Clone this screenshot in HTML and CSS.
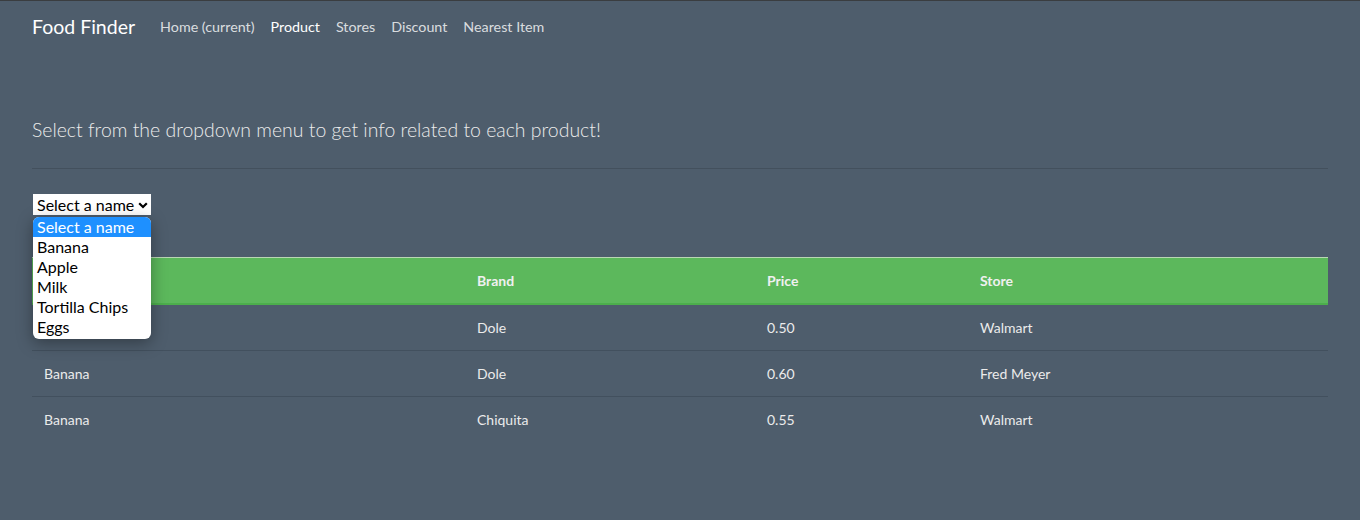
FILE: index.html
```html
<!DOCTYPE html>
<html lang="en">
<head>
<meta charset="utf-8">
<title>Food Finder</title>
<link rel="stylesheet" href="styles.css">
</head>
<body>
<nav class="navbar">
  <a class="brand" href="#">Food Finder</a>
  <ul class="nav-links">
    <li><a class="nav-link" href="#">Home (current)</a></li>
    <li><a class="nav-link active" href="#">Product</a></li>
    <li><a class="nav-link" href="#">Stores</a></li>
    <li><a class="nav-link" href="#">Discount</a></li>
    <li><a class="nav-link" href="#">Nearest Item</a></li>
  </ul>
</nav>
<main class="container">
  <p class="lead">Select from the dropdown menu to get info related to each product!</p>
  <hr class="divider">
  <div class="picker">
    <div class="select">
      <span>Select a name</span>
      <svg class="chevron" width="10" height="7" viewBox="0 0 10 7"><path d="M1.2 1.2 L5 5 L8.8 1.2" fill="none" stroke="#000" stroke-width="2.2"/></svg>
    </div>
    <ul class="options">
      <li class="option selected">Select a name</li>
      <li class="option">Banana</li>
      <li class="option">Apple</li>
      <li class="option">Milk</li>
      <li class="option">Tortilla Chips</li>
      <li class="option">Eggs</li>
    </ul>
  </div>
  <table class="products">
    <colgroup>
      <col class="c-name"><col class="c-brand"><col class="c-price"><col class="c-store">
    </colgroup>
    <thead>
      <tr><th>Name</th><th>Brand</th><th>Price</th><th>Store</th></tr>
    </thead>
    <tbody>
      <tr><td>Banana</td><td>Dole</td><td>0.50</td><td>Walmart</td></tr>
      <tr><td>Banana</td><td>Dole</td><td>0.60</td><td>Fred Meyer</td></tr>
      <tr><td>Banana</td><td>Chiquita</td><td>0.55</td><td>Walmart</td></tr>
    </tbody>
  </table>
</main>
</body>
</html>
```
FILE: styles.css
```css
html, body {
  margin: 0;
  padding: 0;
}
body {
  background: #4e5d6c;
  border-top: 1px solid #3a3d40;
  font-family: Lato, "Open Sans", sans-serif;
  color: #ebebeb;
  font-size: 14px;
  line-height: 1.5;
  min-height: 519px;
}
.navbar {
  display: flex;
  align-items: center;
  height: 51px;
  padding: 0 32px;
}
.brand {
  color: #fff;
  text-decoration: none;
  font-size: 19.5px;
  line-height: 30px;
  margin-right: 25px;
}
.nav-links {
  display: flex;
  list-style: none;
  margin: 0;
  padding: 0;
}
.nav-link {
  display: block;
  padding: 0 8px;
  font-size: 14.3px;
  color: rgba(255,255,255,0.8);
  text-decoration: none;
}
.nav-links li:first-child .nav-link { padding-left: 0; }
.nav-link.active { color: #fff; }
.container {
  margin: 0 32px;
}
.lead {
  margin: 63px 0 0;
  font-size: 19.45px;
  font-weight: 300;
  line-height: 30px;
}
.divider {
  margin: 23px 0 0;
  border: 0;
  border-top: 1px solid #43505d;
  height: 0;
}
.picker {
  position: relative;
  margin-top: 25px;
  margin-left: 1px;
  width: 118px;
}
.select {
  display: flex;
  align-items: center;
  justify-content: space-between;
  height: 21px;
  padding: 0 3px 0 4px;
  background: #fff;
  color: #000;
  font-size: 16px;
  line-height: 21px;
}
.chevron { margin-top: 1px; }
.options {
  position: absolute;
  top: 23px;
  left: 0;
  width: 118px;
  margin: 0;
  padding: 0 0 2px;
  list-style: none;
  background: #fff;
  border-radius: 6px;
  box-shadow: 0 4px 16px rgba(0,0,0,0.35);
  overflow: hidden;
  z-index: 5;
}
.option {
  height: 20px;
  line-height: 20px;
  padding-left: 4px;
  color: #000;
  font-size: 16px;
}
.option.selected {
  background: #1e90ff;
  color: #fff;
}
.products {
  margin-top: 42px;
  width: 100%;
  border-collapse: collapse;
  table-layout: fixed;
}
.c-name { width: 433px; }
.c-brand { width: 290px; }
.c-price { width: 213px; }
.c-store { width: 360px; }
.products th, .products td {
  text-align: left;
  padding: 12px;
  line-height: 21px;
  font-size: 14px;
}
.products thead th {
  background: #5cb85c;
  color: #f0f0f0;
  font-weight: 700;
  border-top: 1px solid #b9d7b4;
  border-bottom: 2px solid #4cae4c;
}
.products tbody td {
  border-bottom: 1px solid #42505e;
}
.products tbody tr:last-child td { border-bottom: 0; }
```
